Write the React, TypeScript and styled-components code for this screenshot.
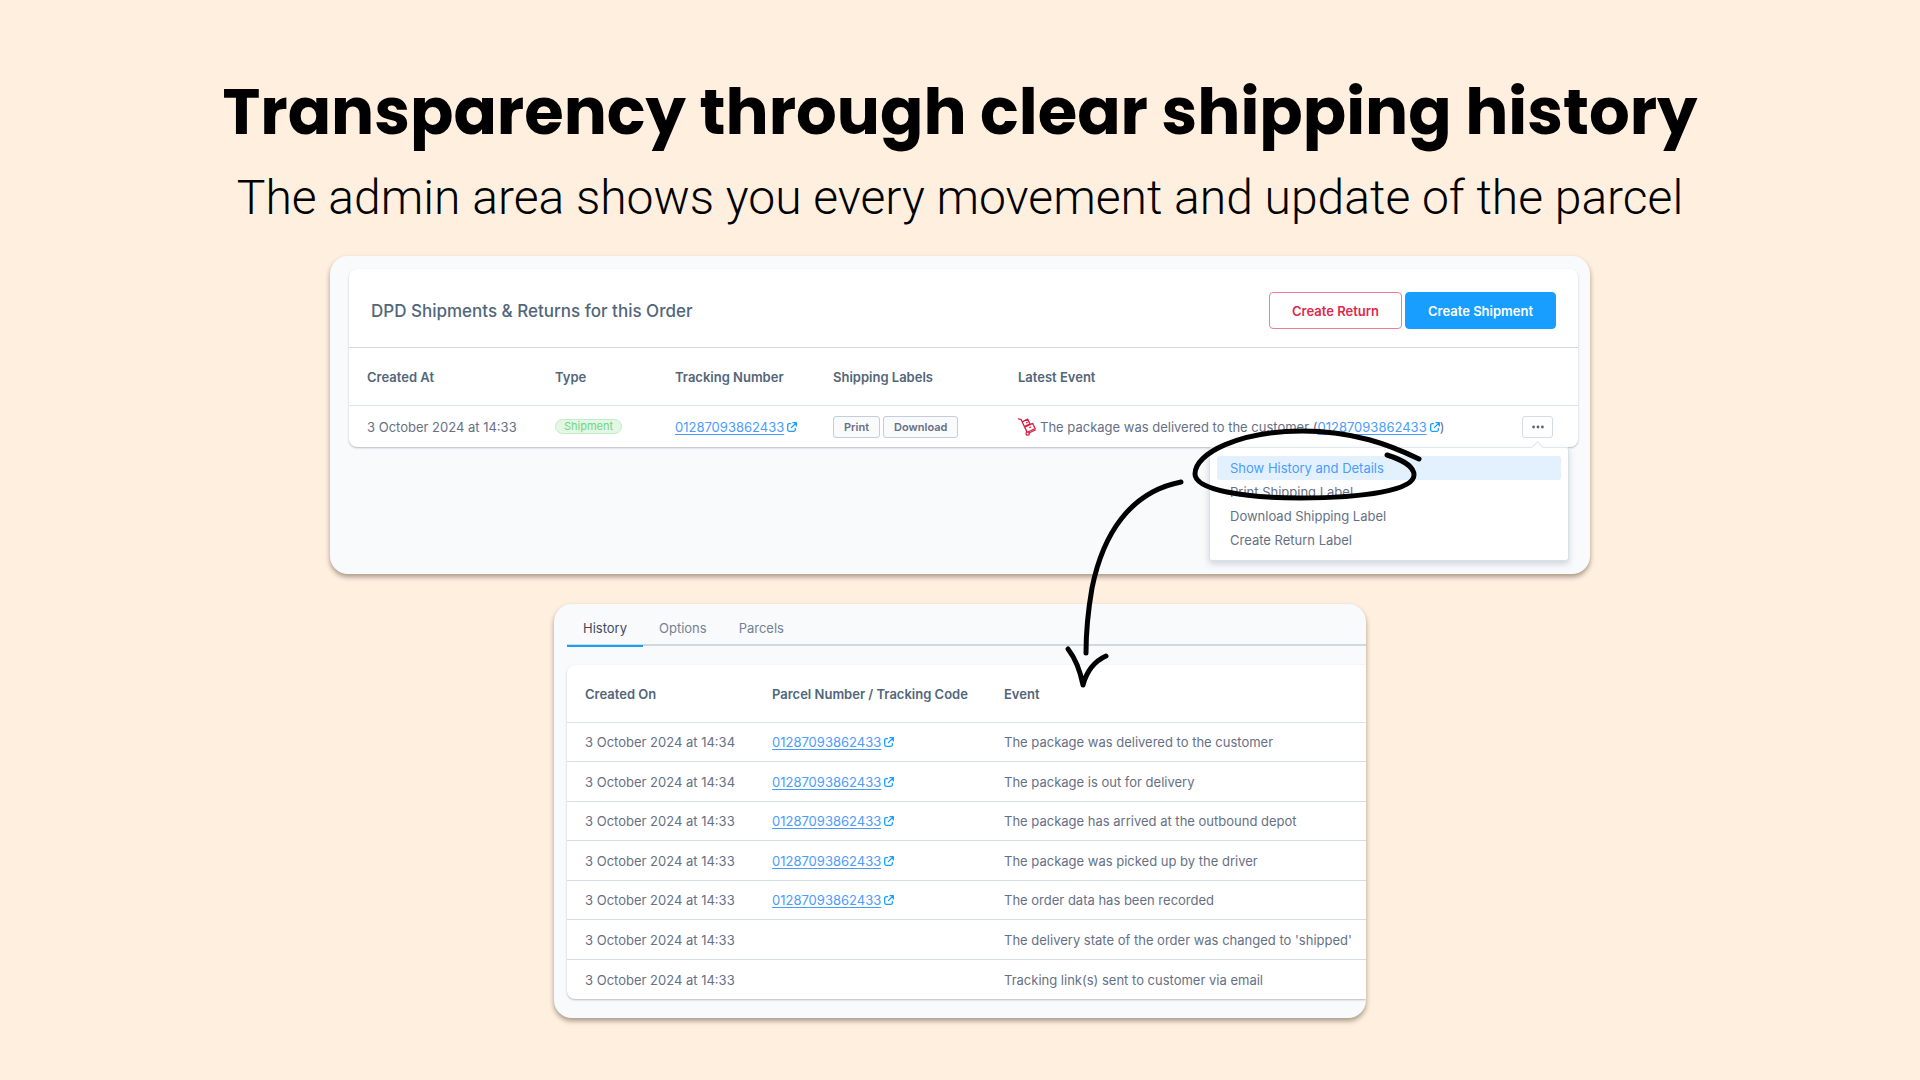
import React from "react";
import styled, { createGlobalStyle, css } from "styled-components";

const Global = createGlobalStyle`
  * { box-sizing: border-box; }
  body {
    margin: 0;
    background: #ffefdf;
    font-family: Inter, "Liberation Sans", sans-serif;
    font-size: 13px;
    line-height: 24px;
    color: #667085;
  }
  button { font: inherit; cursor: pointer; }
`;

const Page = styled.main`
  min-height: 100vh;
  padding: 72px 24px 60px;
`;

const Intro = styled.header`
  text-align: center;
  color: #000;
`;

const Headline = styled.h1`
  margin: 0;
  font-family: Poppins, Inter, "Liberation Sans", sans-serif;
  font-size: 64px;
  line-height: 80px;
  font-weight: 700;
`;

const Tagline = styled.p`
  margin: 16px 0 0;
  font-family: Roboto, "Liberation Sans", sans-serif;
  font-size: 48px;
  line-height: 60px;
  font-weight: 300;
`;

const Stage = styled.div`
  position: relative;
  width: 100%;
  max-width: 1260px;
  margin: 28px auto 0;
  display: flex;
  flex-direction: column;
  align-items: center;
  gap: 30px;
`;

const Panel = styled.section`
  background: #f9fafc;
  border-radius: 18px;
  box-shadow: 0 3px 5px rgba(40, 25, 10, 0.4);
`;

const OrderPanel = styled(Panel)`
  width: 100%;
  padding: 13px 12px 127px 19px;
`;

const DetailPanel = styled(Panel)`
  width: 100%;
  max-width: 812px;
  padding: 0 0 19px 13px;
  overflow: hidden;
`;

const Card = styled.div<{ $bleed?: boolean }>`
  background: #fff;
  border-radius: ${(p) => (p.$bleed ? "8px 0 0 8px" : "8px")};
  box-shadow: 0 1px 2px rgba(30, 40, 60, 0.3);
`;

const CardHeader = styled.div`
  display: flex;
  align-items: center;
  justify-content: space-between;
  padding: 23px 22px 18px;
  border-bottom: 1px solid #d1d9e0;
`;

const CardTitle = styled.h2`
  margin: 0;
  font-size: 17px;
  font-weight: 500;
  color: #52667a;
`;

const Actions = styled.div`
  display: flex;
  gap: 3px;
`;

const ActionButton = styled.button<{ $primary?: boolean }>`
  height: 37px;
  padding: 0 22px;
  border-radius: 4px;
  font-weight: 600;
  border: 1px solid #ea7f93;
  background: #fff;
  color: #de294c;
  ${(p) =>
    p.$primary &&
    css`
      border-color: #189eff;
      background: #189eff;
      color: #fff;
    `}
`;

const Table = styled.table`
  width: 100%;
  border-collapse: separate;
  border-spacing: 0;
  table-layout: fixed;
`;

const Col = styled.col<{ $w?: number }>`
  width: ${(p) => (p.$w ? `${p.$w}px` : "auto")};
`;

const Th = styled.th`
  height: 58px;
  padding: 1px 0 0 18px;
  text-align: left;
  font-weight: 600;
  color: #52667a;
  white-space: nowrap;
  border-bottom: 1px solid #dbe2e8;
`;

const Td = styled.td<{ $tall?: boolean }>`
  height: ${(p) => (p.$tall ? 41 : 39)}px;
  padding: 0 0 0 18px;
  white-space: nowrap;
`;

const LogRow = styled.tr`
  &:nth-child(even) > td { height: 40px; }
  &:not(:last-child) > td { border-bottom: 1px solid #d5dde5; }
`;

const Badge = styled.span`
  display: block;
  width: fit-content;
  height: 15px;
  padding: 0 8px;
  border: 1px solid #c3ecc9;
  border-radius: 8px;
  background: #e3f7e4;
  color: #6fd684;
  font-size: 11px;
  line-height: 13px;
`;

const SmallButtons = styled.div`
  display: flex;
  gap: 3px;
`;

const SmallButton = styled.button`
  height: 22px;
  padding: 0 10px;
  border: 1px solid #c5ced8;
  border-radius: 3px;
  background: #f9fafb;
  color: #667085;
  font-size: 11px;
  line-height: 20px;
  font-weight: 600;
`;

const Tracking = styled.span`
  display: inline-flex;
  align-items: center;
  gap: 3px;
  color: #189eff;
  svg { display: block; }
`;

const TrackingAnchor = styled.a`
  color: #4a9cff;
  text-decoration: underline;
  text-underline-offset: 2px;
`;

const Event = styled.div`
  display: flex;
  align-items: center;
  svg { flex: none; }
  > svg { margin-right: 4px; }
`;

const MenuAnchor = styled.div`
  position: relative;
  width: 31px;
`;

const MoreButton = styled.button`
  display: flex;
  align-items: center;
  justify-content: center;
  width: 31px;
  height: 22px;
  padding: 0;
  border: 1px solid #d5dce4;
  border-radius: 3px;
  background: #fff;
  color: #52667a;
`;

const Menu = styled.div`
  position: absolute;
  z-index: 2;
  top: 31px;
  right: -16px;
  width: 360px;
  padding: 8px 7px;
  background: #fff;
  border: 1px solid #d8e0e8;
  border-top-color: #e3e8ee;
  border-radius: 3px;
  box-shadow: 0 3px 6px rgba(60, 80, 110, 0.22);
  &::before {
    content: "";
    position: absolute;
    top: -5px;
    right: 26px;
    width: 8px;
    height: 8px;
    background: #fff;
    border: solid #dde3ea;
    border-width: 1px 0 0 1px;
    transform: rotate(45deg);
  }
`;

const MenuItem = styled.button<{ $active?: boolean }>`
  display: block;
  width: 100%;
  height: 24px;
  padding: 0 13px;
  border: 0;
  border-radius: 3px;
  text-align: left;
  background: ${(p) => (p.$active ? "#e3f1ff" : "transparent")};
  color: ${(p) => (p.$active ? "#4a9cff" : "#667085")};
`;

const Tabs = styled.div`
  display: flex;
  height: 42px;
  margin-bottom: 19px;
  border-bottom: 2px solid #d1d9e0;
`;

const Tab = styled.button<{ $active?: boolean }>`
  height: 43px;
  padding: 7px 16px 0;
  border: 0;
  border-bottom: 2px solid ${(p) => (p.$active ? "#189eff" : "transparent")};
  background: none;
  color: ${(p) => (p.$active ? "#3f4b5c" : "#758195")};
`;

const Marks = styled.svg`
  position: absolute;
  z-index: 3;
  top: 0;
  right: 0;
  pointer-events: none;
`;

const ExternalIcon = () => (
  <svg width="10" height="10" viewBox="0 0 10 10" fill="none" stroke="currentColor" strokeWidth="1.3" strokeLinecap="round" strokeLinejoin="round" aria-hidden="true">
    <path d="M3.6 1.6H2.2A1.5 1.5 0 0 0 .7 3.1v4.7a1.5 1.5 0 0 0 1.5 1.5h4.6a1.5 1.5 0 0 0 1.5-1.5V6.4" />
    <path d="M6 .7h3.3V4M9.2.8 4.4 5.6" />
  </svg>
);

const TrolleyIcon = () => (
  <svg width="18" height="18" viewBox="0 0 18 18" fill="none" stroke="#de1f44" strokeWidth="1.3" strokeLinecap="round" strokeLinejoin="round" aria-hidden="true">
    <path d="M.7.8 3.2 1.7 8.8 13.6" />
    <path d="m4.6 3.6 5-2.5 2.3 4.8-5 2.5" />
    <path d="m7.2 8.8 7.4-3.4 2.6 5.3-7.3 3.3" />
    <path d="m8.6 4.8.6-.3M11.8 9.4l.7-.3M11 15l6.3-3" />
    <circle cx="9.7" cy="15.5" r="1.7" />
  </svg>
);

const TrackingLink = () => (
  <Tracking>
    <TrackingAnchor href="#tracking">01287093862433</TrackingAnchor>
    <ExternalIcon />
  </Tracking>
);

const menuItems = ["Show History and Details", "Print Shipping Label", "Download Shipping Label", "Create Return Label"];

const log = [
  { at: "3 October 2024 at 14:34", tracked: true, event: "The package was delivered to the customer" },
  { at: "3 October 2024 at 14:34", tracked: true, event: "The package is out for delivery" },
  { at: "3 October 2024 at 14:33", tracked: true, event: "The package has arrived at the outbound depot" },
  { at: "3 October 2024 at 14:33", tracked: true, event: "The package was picked up by the driver" },
  { at: "3 October 2024 at 14:33", tracked: true, event: "The order data has been recorded" },
  { at: "3 October 2024 at 14:33", tracked: false, event: "The delivery state of the order was changed to 'shipped'" },
  { at: "3 October 2024 at 14:33", tracked: false, event: "Tracking link(s) sent to customer via email" },
];

export default function App() {
  return (
    <>
      <Global />
      <Page>
        <Intro>
          <Headline>Transparency through clear shipping history</Headline>
          <Tagline>The admin area shows you every movement and update of the parcel</Tagline>
        </Intro>
        <Stage>
          <OrderPanel>
            <Card>
              <CardHeader>
                <CardTitle>DPD Shipments &amp; Returns for this Order</CardTitle>
                <Actions>
                  <ActionButton type="button">Create Return</ActionButton>
                  <ActionButton type="button" $primary>Create Shipment</ActionButton>
                </Actions>
              </CardHeader>
              <Table>
                <colgroup>
                  <Col $w={188} />
                  <Col $w={120} />
                  <Col $w={158} />
                  <Col $w={185} />
                  <Col />
                  <Col $w={74} />
                </colgroup>
                <thead>
                  <tr>
                    <Th scope="col">Created At</Th>
                    <Th scope="col">Type</Th>
                    <Th scope="col">Tracking Number</Th>
                    <Th scope="col">Shipping Labels</Th>
                    <Th scope="col" colSpan={2}>Latest Event</Th>
                  </tr>
                </thead>
                <tbody>
                  <tr>
                    <Td $tall>3 October 2024 at 14:33</Td>
                    <Td $tall><Badge>Shipment</Badge></Td>
                    <Td $tall><TrackingLink /></Td>
                    <Td $tall>
                      <SmallButtons>
                        <SmallButton type="button">Print</SmallButton>
                        <SmallButton type="button">Download</SmallButton>
                      </SmallButtons>
                    </Td>
                    <Td $tall>
                      <Event>
                        <TrolleyIcon />
                        The package was delivered to the customer (<TrackingLink />)
                      </Event>
                    </Td>
                    <Td $tall>
                      <MenuAnchor>
                        <MoreButton type="button" aria-label="More actions" aria-expanded="true">
                          <svg width="12" height="4" viewBox="0 0 12 4" fill="currentColor" aria-hidden="true">
                            <circle cx="1.6" cy="2" r="1.4" />
                            <circle cx="6" cy="2" r="1.4" />
                            <circle cx="10.4" cy="2" r="1.4" />
                          </svg>
                        </MoreButton>
                        <Menu role="menu">
                          {menuItems.map((label, i) => (
                            <MenuItem key={label} type="button" role="menuitem" $active={i === 0}>{label}</MenuItem>
                          ))}
                        </Menu>
                      </MenuAnchor>
                    </Td>
                  </tr>
                </tbody>
              </Table>
            </Card>
          </OrderPanel>

          <DetailPanel>
            <Tabs role="tablist">
              <Tab type="button" role="tab" aria-selected="true" $active>History</Tab>
              <Tab type="button" role="tab" aria-selected="false">Options</Tab>
              <Tab type="button" role="tab" aria-selected="false">Parcels</Tab>
            </Tabs>
            <Card $bleed>
              <Table>
                <colgroup>
                  <Col $w={187} />
                  <Col $w={232} />
                  <Col />
                </colgroup>
                <thead>
                  <tr>
                    <Th scope="col">Created On</Th>
                    <Th scope="col">Parcel Number / Tracking Code</Th>
                    <Th scope="col">Event</Th>
                  </tr>
                </thead>
                <tbody>
                  {log.map((row) => (
                    <LogRow key={row.event}>
                      <Td>{row.at}</Td>
                      <Td>{row.tracked && <TrackingLink />}</Td>
                      <Td>{row.event}</Td>
                    </LogRow>
                  ))}
                </tbody>
              </Table>
            </Card>
          </DetailPanel>

          <Marks width="1260" height="440" viewBox="0 0 1260 440" fill="none" stroke="#000" strokeWidth="5" strokeLinecap="round" strokeLinejoin="round" aria-hidden="true">
            <path d="M1089 203C1060 189 1024 175 972 175C910 175 865 197 865 218C865 234 915 242 970 242C1035 242 1084 234 1084 219C1084 210 1070 203 1057 199" />
            <path d="M851 226C800 236 773 278 762 332C758 355 756 376 756 397" />
            <path d="M738 393C745 402 750 414 753 429C757 414 765 405 776 400" />
          </Marks>
        </Stage>
      </Page>
    </>
  );
}
